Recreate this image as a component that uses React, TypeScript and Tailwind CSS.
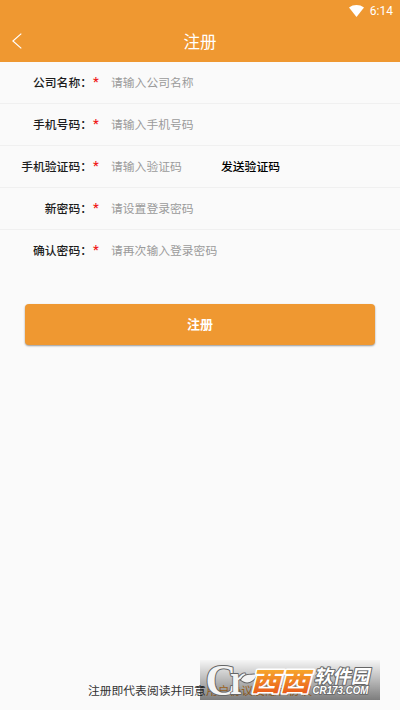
import { clsx } from 'clsx';

interface Field {
  label: string;
  placeholder: string;
  action?: string;
}

const fields: Field[] = [
  { label: '公司名称', placeholder: '请输入公司名称' },
  { label: '手机号码', placeholder: '请输入手机号码' },
  { label: '手机验证码', placeholder: '请输入验证码', action: '发送验证码' },
  { label: '新密码', placeholder: '请设置登录密码' },
  { label: '确认密码', placeholder: '请再次输入登录密码' },
];

function Header() {
  return (
    <header className="h-[62px] bg-[#ef9831] text-white">
      <div className="flex h-[21px] items-center justify-end pr-[7px]">
        <svg className="mr-[6px] h-3 w-[15px]" viewBox="0 0 15 12" fill="currentColor">
          <path d="M0 2.5C4.4-.8 10.6-.8 15 2.5L7.5 12Z" />
        </svg>
        <span className="pt-px font-[Roboto] text-[12px] leading-[21px]">6:14</span>
      </div>
      <div className="relative flex h-[41px] items-center justify-center">
        <svg className="absolute top-3 left-3 h-4 w-[10px]" viewBox="0 0 10 16" fill="none" stroke="currentColor" strokeWidth="1.2">
          <path d="M9.3.6.9 8l8.4 7.4" />
        </svg>
        <h1 className="text-[16.5px] leading-[41px]">注册</h1>
      </div>
    </header>
  );
}

function FieldRow({ field, last }: { field: Field; last: boolean }) {
  return (
    <div className={clsx('flex h-[42px] items-center pb-[2px] text-[11.8px]', !last && 'border-b border-[#f0f0f0]')}>
      <label className="w-[92px] shrink-0 text-right font-medium text-[#1c1c1c]">{field.label}：</label>
      <span className="w-[19px] shrink-0 pl-px font-[Roboto] text-[13px] font-medium text-[#f01818]">*</span>
      <span className="w-[110px] whitespace-nowrap text-[#9b9b9b]">{field.placeholder}</span>
      {field.action && <button className="font-medium text-black">{field.action}</button>}
    </div>
  );
}

function Watermark() {
  return (
    <svg className="absolute top-[660px] left-[200px] h-10 w-[180px]" viewBox="0 0 180 40">
      <defs>
        <linearGradient id="plate" x1="0" y1="0" x2="0" y2="1">
          <stop offset="0" stopColor="#000" stopOpacity="0.02" />
          <stop offset="1" stopColor="#000" stopOpacity="0.5" />
        </linearGradient>
        <linearGradient id="orange" x1="0" y1="0" x2="0" y2="1">
          <stop offset="0.2" stopColor="#f8ac2c" />
          <stop offset="0.9" stopColor="#e8561a" />
        </linearGradient>
      </defs>
      <rect width="180" height="40" fill="url(#plate)" />
      <g fontFamily="Liberation Serif, serif" fontWeight="700" fill="#f4f4f4" stroke="#666" strokeWidth="2" strokeLinejoin="round" paintOrder="stroke">
        <text transform="translate(5.5 34.5) scale(.97 1)" fontSize="44">C</text>
        <text transform="translate(30 34) scale(.8 1)" fontSize="45">r</text>
        <path d="M41 20C45 13 50 15.5 57 14C54 22 47 25 41 20Z" />
      </g>
      <g fontFamily="Noto Sans CJK SC, sans-serif" strokeLinejoin="round" paintOrder="stroke">
        <text transform="translate(51 31) skewX(-14) scale(1.13 1)" fontSize="26" fontWeight="900" fill="url(#orange)" stroke="#fff" strokeWidth="3">西西</text>
        <text transform="translate(114 22.8) skewX(-12)" fontSize="18.5" fontWeight="700" fill="#fff" stroke="#666" strokeWidth="2">软件园</text>
      </g>
      <text x="112.5" y="33.5" fontFamily="Liberation Sans, sans-serif" fontSize="10" fontWeight="700" fontStyle="italic" textLength="56" lengthAdjust="spacingAndGlyphs" fill="#fff" stroke="#666" strokeWidth="1.6" paintOrder="stroke">CR173.COM</text>
    </svg>
  );
}

export default function App() {
  return (
    <div className="relative flex h-[710px] w-[400px] flex-col overflow-hidden bg-[#fafafa] font-['Noto_Sans_CJK_SC',sans-serif]">
      <Header />
      <form>
        {fields.map((field, i) => (
          <FieldRow key={field.label} field={field} last={i === fields.length - 1} />
        ))}
      </form>
      <button className="mx-[25px] mt-8 h-[41px] rounded-[4px] bg-[#ef9831] pb-px text-[13px] font-bold text-white shadow-[0_1px_2px_rgba(0,0,0,0.4)]">
        注册
      </button>
      <p className="mt-auto mb-[10px] text-center text-[11.8px] leading-5 text-[#333]">
        注册即代表阅读并同意<span className="text-[#ef9831]">用户协议及隐私协议</span>
      </p>
      <Watermark />
    </div>
  );
}
